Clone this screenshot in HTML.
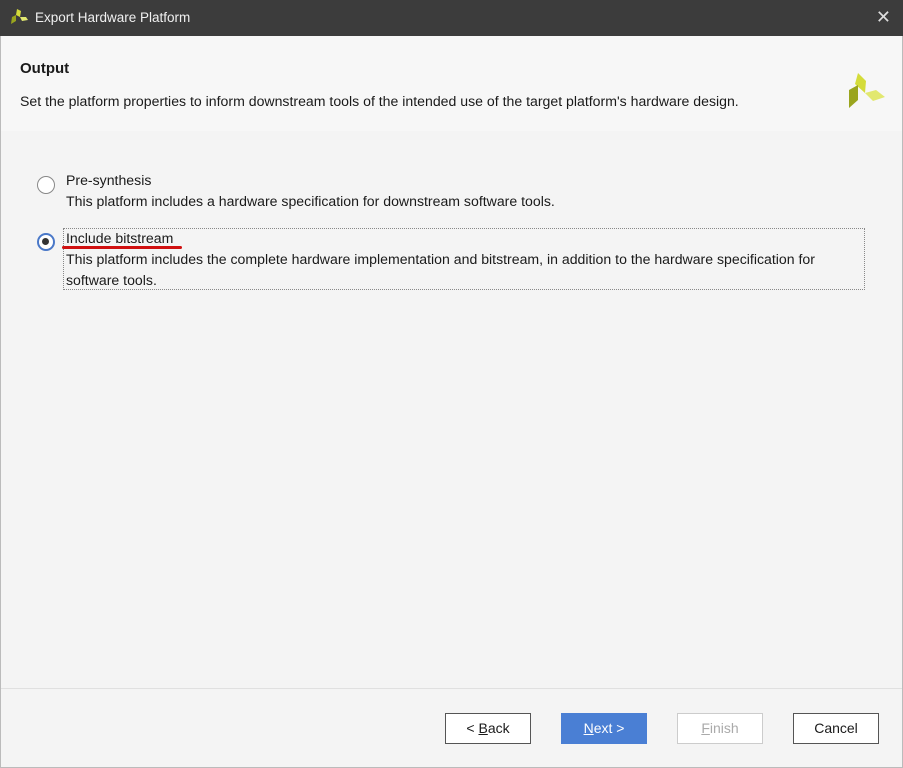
<!DOCTYPE html>
<html><head><meta charset="utf-8"><style>
*{margin:0;padding:0;box-sizing:border-box}
body{width:903px;height:768px;overflow:hidden;background:#f4f4f4;font-family:"Liberation Sans",Arial,sans-serif;color:#1a1a1a;position:relative}
.title{position:absolute;left:0;top:0;width:903px;height:36px;background:#3c3c3c;color:#f0f0f0;font-size:13.5px}
.title span{position:absolute;left:35px;top:10px}
.x{position:absolute;right:12px;top:7px;color:#ddd;font-size:18px}
.head{position:absolute;left:1px;top:36px;width:901px;height:95px;background:#f7f7f7}
h1{position:absolute;left:20px;top:60px;font-size:15px;font-weight:bold}
.desc{position:absolute;left:20px;top:93px;font-size:14.1px}
.t{position:absolute;font-size:14.1px;line-height:21px}
.radio{position:absolute;width:18px;height:18px;border-radius:50%;border:1.5px solid #888;background:#fff}
.radio.on{border:2.5px solid #4a78c8}
.radio.on::after{content:"";position:absolute;left:3px;top:3px;width:7px;height:7px;border-radius:50%;background:#333}
.sel{position:absolute;left:63px;top:228px;width:802px;height:62px;border:1px dotted #888}
.sep{position:absolute;left:1px;top:688px;width:901px;height:1px;background:#e0e0e0}
.btn{position:absolute;top:713px;width:86px;height:31px;border:1px solid #555;background:#fff;font-size:14px;text-align:center;line-height:29px}
.border{position:absolute;left:0;top:36px;width:903px;height:732px;border:1px solid #bbb;border-top:none;pointer-events:none}
</style></head><body>
<div class="title">
<svg style="position:absolute;left:9px;top:8px" width="20" height="18" viewBox="0 0 20 18"><polygon points="8,1 12,3 11,9 7,7" fill="#d4dc3a"/><polygon points="3,9 7,7 7,13 2,16" fill="#9aa51e"/><polygon points="11,9 17,9 19,12 13,13" fill="#e2e870"/></svg>
<span>Export Hardware Platform</span><div class="x">✕</div></div>
<div class="head"></div>
<h1>Output</h1>
<div class="desc">Set the platform properties to inform downstream tools of the intended use of the target platform's hardware design.</div>
<svg style="position:absolute;left:846px;top:72px" width="40" height="38" viewBox="0 0 40 38"><polygon points="12,1 20,9 19,21 9,12" fill="#d4dc3a"/><polygon points="3,18 12,13 12,28 3,36" fill="#9aa51e"/><polygon points="19,21 30,18 39,25 27,29" fill="#e2e870"/></svg>
<div class="radio" style="left:37px;top:176px"></div>
<div class="t" style="left:66px;top:170px">Pre-synthesis</div>
<div class="t" style="left:66px;top:191px">This platform includes a hardware specification for downstream software tools.</div>
<div class="sel"></div>
<div class="radio on" style="left:37px;top:233px"></div>
<div class="t" style="left:66px;top:228px">Include bitstream</div>
<div style="position:absolute;left:62px;top:246px;width:120px;height:3px;border-radius:2px;background:#d01010"></div>
<div class="t" style="left:66px;top:249px">This platform includes the complete hardware implementation and bitstream, in addition to the hardware specification for</div>
<div class="t" style="left:66px;top:270px">software tools.</div>
<div class="sep"></div>
<div class="btn" style="left:445px">&lt; <u>B</u>ack</div>
<div class="btn" style="left:561px;background:#4a7fd4;border-color:#4a7fd4;color:#fff"><u>N</u>ext &gt;</div>
<div class="btn" style="left:677px;border-color:#ccc;color:#aaa"><u>F</u>inish</div>
<div class="btn" style="left:793px">Cancel</div>
<div class="border"></div>
</body></html>
